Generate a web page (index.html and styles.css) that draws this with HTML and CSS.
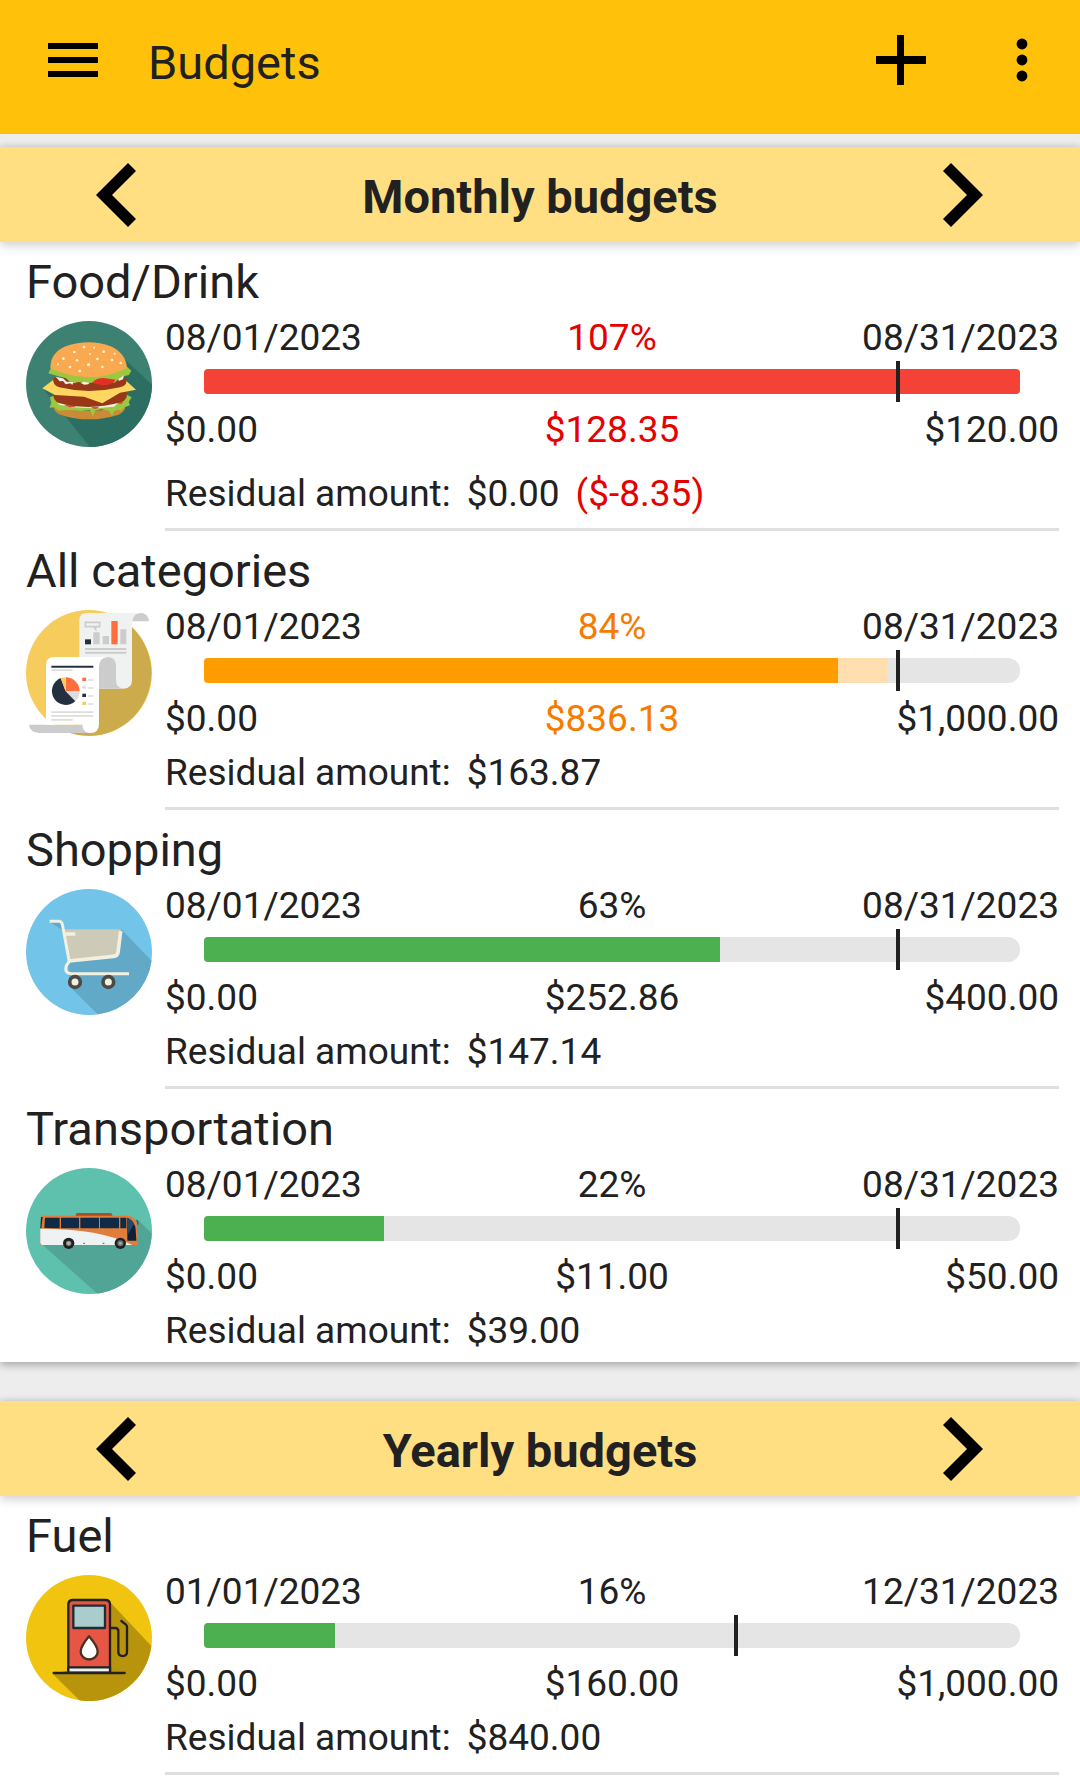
FILE: index.html
```html
<!DOCTYPE html>
<html lang="en">
<head>
<meta charset="utf-8">
<meta name="viewport" content="width=device-width, initial-scale=1">
<title>Budgets</title>
<link rel="stylesheet" href="styles.css">
</head>
<body>
<header class="app-bar">
  <button class="icon-button" type="button" aria-label="Menu">
    <svg width="50" height="50" viewBox="0 0 50 50"><path d="M0 8h50v6H0zM0 22h50v6H0zM0 36h50v6H0z"/></svg>
  </button>
  <h1 class="app-title">Budgets</h1>
  <button class="icon-button" type="button" aria-label="Add budget">
    <svg width="50" height="50" viewBox="0 0 50 50"><path d="M21 0h7v21h22v8H28v21h-7V29H0v-8h21z"/></svg>
  </button>
  <button class="icon-button more" type="button" aria-label="More options">
    <svg width="12" height="50" viewBox="0 0 12 50"><circle cx="6" cy="9" r="5.4"/><circle cx="6" cy="25" r="5.4"/><circle cx="6" cy="41" r="5.4"/></svg>
  </button>
</header>

<main class="cards">
  <section class="card">
    <div class="period">
      <button class="icon-button" type="button" aria-label="Previous month">
        <svg width="40" height="66" viewBox="0 0 40 66"><path d="M31 1l8 8-24 24 24 24-8 8L-1 33z"/></svg>
      </button>
      <h2 class="period-title">Monthly budgets</h2>
      <button class="icon-button" type="button" aria-label="Next month">
        <svg width="40" height="66" viewBox="0 0 40 66"><path d="M8 1L0 9l24 24L0 57l8 8 32-32z"/></svg>
      </button>
    </div>

    <article class="budget over">
      <h3 class="name">Food/Drink</h3>
      <div class="content">
        <svg class="category" viewBox="48 33 378 378" aria-hidden="true">
          <circle cx="237" cy="222" r="189" fill="#3c8172"/>
          <path d="M344 148L426 224A189 189 0 0 1 240 411L103 240z" fill="#2c6e61"/>
          <path d="M131 290q106 26 215-1q0 17-20 25q-90 28-175 0q-20-9-20-24z" fill="#cb8a35"/>
          <path d="M120 262l16-8 205-4 24 12-9 14 4 10-16 6-12 10-10-3-10 5-6 15-9-17-24-4-18 4-6 18-9-19-28 2-36-3-30 2-12-10-16 1 6-13z" fill="#9cc83f"/>
          <path d="M137 269q40 24 100 20t95-17l-20 18-55 5-70-3-40-8z" fill="#f1f0e4"/>
          <path d="M160 284l18 8 20-2-14-9zM243 291q13 12 25-1zM320 280l20-12-4 14z" fill="#e0483a"/>
          <path d="M130 246q107-30 219 0q7 23-17 31q-92 26-184 3q-21-8-18-34z" fill="#983818"/>
          <path d="M97 235l40-31 203 1 38 34-48 9-53 32-55-20-87-5z" fill="#ffd760"/>
          <path d="M130 203q107-17 219 0q6 23-19 29q-92 22-182 0q-22-7-18-29z" fill="#983818"/>
          <path d="M115 190l9-18 227-2 13 12-7 13-25 6-18 17-20-4-18 8-24-5-24 4-22-5-20 5-18-16-28-8z" fill="#9cc83f"/>
          <path d="M137 200l12 14 10-1 8 10 14-3 6 5 3-9-20-1-11-10zM213 220l8-5 17 3-3 5-12 1zM325 206l17-10-3 12-13 5z" fill="#f1f0e4"/>
          <path d="M247 219q9-15 34-15l36 5q-8 16-41 17z" fill="#e52e27"/>
          <path d="M121 175q0-47 46-66q70-24 135 0q45 20 49 65q-110 55-230 1z" fill="#f9aa50"/>
          <g fill="#fff2d5"><circle cx="222" cy="111" r="4"/><circle cx="193" cy="126" r="4"/><circle cx="160" cy="146" r="4"/><circle cx="144" cy="163" r="3"/><circle cx="180" cy="171" r="4"/><circle cx="201" cy="151" r="4"/><circle cx="236" cy="164" r="5"/><circle cx="240" cy="132" r="3"/><circle cx="281" cy="125" r="4"/><circle cx="252" cy="113" r="3"/><circle cx="262" cy="147" r="4"/><circle cx="306" cy="150" r="4"/><circle cx="332" cy="159" r="4"/><circle cx="277" cy="171" r="4"/><circle cx="209" cy="183" r="4"/><circle cx="314" cy="131" r="3"/></g>
        </svg>
        <div class="details">
          <div class="triple"><span>08/01/2023</span><span class="value">107%</span><span>08/31/2023</span></div>
          <div class="track" role="progressbar" aria-label="Food/Drink spent" aria-valuenow="107" aria-valuemin="0" aria-valuemax="107">
            <div class="fill full" style="width:100%"></div>
            <div class="today" style="left:85%"></div>
          </div>
          <div class="triple amounts"><span>$0.00</span><span class="value">$128.35</span><span>$120.00</span></div>
          <p class="residual"><span>Residual amount:</span><span>$0.00</span><span class="value">($-8.35)</span></p>
          <hr class="divider">
        </div>
      </div>
    </article>

    <article class="budget warning">
      <h3 class="name">All categories</h3>
      <div class="content">
        <svg class="category" viewBox="48 30 378 378" aria-hidden="true">
          <circle cx="237" cy="219" r="189" fill="#f6cd5d"/>
          <path d="M365 81A189 189 0 0 1 183 400l35-135 147-90z" fill="#ccab4d"/>
          <path d="M366 64q4-25 26-25t25 25z" fill="#ccc"/>
          <path d="M208 60q0-21 22-21h160q-24 2-24 28v174q0 25-25 25h-80V172h-53z" fill="#f0f2f2"/>
          <path d="M266 195q2-24 26-24t26 24v46q0 25 24 25h-76z" fill="#ccc"/>
          <path d="M226 67h43v13h-43zM252 82l5 6v-6" fill="none" stroke="#ccc" stroke-width="5"/>
          <path d="M225 118h18v15h-18z" fill="#243040"/>
          <path d="M250 97h19v36h-19zM278 108h19v25h-19zM331 88h18v45h-18zM225 144h124v6H225zM225 155h124v6H225z" fill="#ccc"/>
          <path d="M304 63h19v70h-19z" fill="#ff6e3d"/>
          <path d="M57 374h160l22 25H88q-29-3-31-25z" fill="#ccc"/>
          <path d="M108 194q0-23 24-23h162q-27 2-27 28v174q-1 26-25 26t-25-25H108z" fill="#fff"/>
          <path d="M124 197h126v6H124z" fill="#243040"/>
          <path d="M124 208h64v5h-64zM124 334h126v5H124zM124 345h126v5H124zM124 357h64v5h-64zM233 238h17v4h-17zM233 262h17v4h-17zM233 286h17v4h-17zM233 310h17v4h-17zM217 257h10v9h-10z" fill="#ddd"/>
          <path d="M167 274V232a42 42 0 0 1 42 42z" fill="#ff6e3d"/>
          <path d="M167 274h42a42 42 0 0 1-13 30z" fill="#ddd"/>
          <path d="M167 274l29 30a42 42 0 1 1-44-70z" fill="#243040"/>
          <path d="M167 274l-15-40 15-2z" fill="#f6cd5d"/>
          <path d="M217 233h11v10h-11z" fill="#ff6e3d"/><path d="M217 281h11v10h-11z" fill="#243040"/><path d="M217 305h11v10h-11z" fill="#f6cd5d"/>
        </svg>
        <div class="details">
          <div class="triple"><span>08/01/2023</span><span class="value">84%</span><span>08/31/2023</span></div>
          <div class="track" role="progressbar" aria-label="All categories spent" aria-valuenow="84" aria-valuemin="0" aria-valuemax="100">
            <div class="fill" style="width:77.7%"></div>
            <div class="planned" style="width:6%"></div>
            <div class="today" style="left:85%"></div>
          </div>
          <div class="triple amounts"><span>$0.00</span><span class="value">$836.13</span><span>$1,000.00</span></div>
          <p class="residual"><span>Residual amount:</span><span>$163.87</span></p>
          <hr class="divider">
        </div>
      </div>
    </article>

    <article class="budget">
      <h3 class="name">Shopping</h3>
      <div class="content">
        <svg class="category" viewBox="48 27 378 378" aria-hidden="true">
          <circle cx="237" cy="216" r="189" fill="#72c5e9"/>
          <path d="M119 126h38l22 22h155l91 94A189 189 0 0 1 263 403L178 318l-8-160z" fill="#62a8c7"/>
          <path d="M157 126l8 22h14z" fill="#72c5e9"/>
          <path d="M163 148h170l-11 82-146 14z" fill="#cecab8"/>
          <path d="M119 124h27q10 0 12 13l19 104q1 6-7 14-9 24 12 26h175" fill="none" stroke="#f3f0df" stroke-width="9"/>
          <path d="M166 162h30M177 243l133-14q12-1 14-11l8-65" fill="none" stroke="#f3f0df" stroke-width="11"/>
          <path d="M170 149h157v5H170z" fill="#cecab8"/>
          <circle cx="195" cy="306" r="16" fill="#f3f0df" stroke="#4b4a46" stroke-width="11"/>
          <circle cx="295" cy="306" r="16" fill="#f3f0df" stroke="#4b4a46" stroke-width="11"/>
        </svg>
        <div class="details">
          <div class="triple"><span>08/01/2023</span><span class="value">63%</span><span>08/31/2023</span></div>
          <div class="track" role="progressbar" aria-label="Shopping spent" aria-valuenow="63" aria-valuemin="0" aria-valuemax="100">
            <div class="fill" style="width:63.2%"></div>
            <div class="today" style="left:85%"></div>
          </div>
          <div class="triple amounts"><span>$0.00</span><span class="value">$252.86</span><span>$400.00</span></div>
          <p class="residual"><span>Residual amount:</span><span>$147.14</span></p>
          <hr class="divider">
        </div>
      </div>
    </article>

    <article class="budget">
      <h3 class="name">Transportation</h3>
      <div class="content">
        <svg class="category" viewBox="48 24 378 378" aria-hidden="true">
          <circle cx="237" cy="213" r="189" fill="#5ec1ae"/>
          <path d="M382 178l43 42A189 189 0 0 1 262 401L96 253z" fill="#51a596"/>
          <path d="M200 159h104l4 9H196z" fill="#a94e27"/>
          <path d="M94 167h260q20 2 26 22l4 66H91z" fill="#e07d3a"/>
          <path d="M91 206q180 0 276 49H96q-5-2-5-8z" fill="#eff2f3"/>
          <path d="M93 171h5l-4 34h-3z" fill="#202124"/>
          <path d="M105 173h44v32l-46-1zM153 173h54v32h-54zM211 173h56v32h-56zM270 173h57v32h-57zM331 173h18v32h-18z" fill="#112b46"/>
          <path d="M352 173q23 10 25 35l2 34h-27z" fill="#102039"/>
          <path d="M352 173q14 5 20 19l-20 34z" fill="#254768"/>
          <path d="M379 182q6 1 4 12" fill="none" stroke="#594e45" stroke-width="4"/>
          <circle cx="176" cy="250" r="17" fill="#202020"/><circle cx="176" cy="250" r="8" fill="#8a8b8b"/><circle cx="176" cy="250" r="4" fill="#bbb"/>
          <circle cx="331" cy="250" r="17" fill="#202020"/><circle cx="331" cy="250" r="9" fill="#6d7579"/><circle cx="331" cy="250" r="4" fill="#aaa"/>
          <path d="M220 248h5v4h-5zM278 248h5v4h-5z" fill="#777"/>
        </svg>
        <div class="details">
          <div class="triple"><span>08/01/2023</span><span class="value">22%</span><span>08/31/2023</span></div>
          <div class="track" role="progressbar" aria-label="Transportation spent" aria-valuenow="22" aria-valuemin="0" aria-valuemax="100">
            <div class="fill" style="width:22%"></div>
            <div class="today" style="left:85%"></div>
          </div>
          <div class="triple amounts"><span>$0.00</span><span class="value">$11.00</span><span>$50.00</span></div>
          <p class="residual"><span>Residual amount:</span><span>$39.00</span></p>
        </div>
      </div>
    </article>
  </section>

  <section class="card">
    <div class="period">
      <button class="icon-button" type="button" aria-label="Previous year">
        <svg width="40" height="66" viewBox="0 0 40 66"><path d="M31 1l8 8-24 24 24 24-8 8L-1 33z"/></svg>
      </button>
      <h2 class="period-title">Yearly budgets</h2>
      <button class="icon-button" type="button" aria-label="Next year">
        <svg width="40" height="66" viewBox="0 0 40 66"><path d="M8 1L0 9l24 24L0 57l8 8 32-32z"/></svg>
      </button>
    </div>

    <article class="budget">
      <h3 class="name">Fuel</h3>
      <div class="content">
        <svg class="category" viewBox="48 30 378 378" aria-hidden="true">
          <circle cx="237" cy="219" r="189" fill="#f1c40f"/>
          <path d="M298 109L424 243A189 189 0 0 1 208 406L128 326l100-20z" fill="#b8940d"/>
          <g stroke="#222" stroke-width="7" stroke-linecap="round" stroke-linejoin="round">
            <path d="M175 322V119q0-14 14-14h97q14 0 14 14v203z" fill="#e65644"/>
            <path d="M175 307h125v16H175z" fill="#eceff1"/>
            <path d="M190 122h95v67h-95z" fill="#a9cccd" stroke="#202b35"/>
            <path d="M131 324h213M304 189h12q9 0 9 10v62q0 12 13 12t13-12v-75q0-5-4-8l-13-10" fill="none"/>
            <path d="M237 214q-25 30-25 46a25 23 0 0 0 51 0q0-16-26-46z" fill="#fff" stroke="#4a3020"/>
          </g>
        </svg>
        <div class="details">
          <div class="triple"><span>01/01/2023</span><span class="value">16%</span><span>12/31/2023</span></div>
          <div class="track" role="progressbar" aria-label="Fuel spent" aria-valuenow="16" aria-valuemin="0" aria-valuemax="100">
            <div class="fill" style="width:16%"></div>
            <div class="today" style="left:65.2%"></div>
          </div>
          <div class="triple amounts"><span>$0.00</span><span class="value">$160.00</span><span>$1,000.00</span></div>
          <p class="residual"><span>Residual amount:</span><span>$840.00</span></p>
          <hr class="divider">
        </div>
      </div>
    </article>
  </section>
</main>
</body>
</html>
```

FILE: styles.css
```css
* {
  box-sizing: border-box;
}

body {
  margin: 0;
  min-height: 100vh;
  display: flex;
  flex-direction: column;
  background: #ededed;
  color: #212121;
  font-family: Roboto, "Liberation Sans", sans-serif;
  font-size: 37px;
  line-height: 44px;
}

h1,
h2,
h3,
p {
  margin: 0;
}

.icon-button {
  display: flex;
  padding: 0;
  border: 0;
  background: none;
  color: #000;
  cursor: pointer;
}

.icon-button svg {
  display: block;
  overflow: visible;
  fill: currentColor;
}

.app-bar {
  display: flex;
  align-items: center;
  padding: 32px 52px 46px 48px;
  background: #ffc10a;
}

.app-title {
  flex: 1;
  margin-left: 50px;
  padding-top: 6px;
  font-size: 47px;
  font-weight: 400;
  line-height: 50px;
}

.more {
  margin-left: 90px;
}

.cards {
  flex: 1;
  display: flex;
  flex-direction: column;
  gap: 39px;
  padding-top: 13px;
}

.card {
  background: #fff;
  box-shadow: 0 3px 8px rgba(0, 0, 0, 0.3);
}

.card:last-child {
  flex: 1;
}

.period {
  display: flex;
  align-items: center;
  justify-content: space-between;
  height: 95px;
  padding: 0 97px;
  background: #ffdf82;
  box-shadow: 0 3px 10px rgba(0, 0, 0, 0.2);
}

.period-title {
  padding-top: 5px;
  font-size: 47px;
  font-weight: 700;
  line-height: 56px;
}

.budget {
  padding: 12px 21px 0 26px;
}

.budget:last-child {
  padding-bottom: 9px;
}

.name {
  font-size: 47px;
  font-weight: 400;
  line-height: 56px;
}

.content {
  display: flex;
  align-items: flex-start;
  gap: 13px;
  padding-top: 6px;
}

.category {
  flex: none;
  width: 126px;
  height: 126px;
  margin-top: 5px;
}

.details {
  flex: 1;
}

.triple {
  display: grid;
  grid-template-columns: 1fr auto 1fr;
}

.triple > :last-child {
  text-align: right;
}

.track {
  position: relative;
  display: flex;
  height: 25px;
  margin: 9px 39px 14px;
  border-radius: 4px 12px 12px 4px;
  background: #e5e5e5;
}

.fill {
  border-radius: 4px 0 0 4px;
  background: #4caf50;
}

.full {
  border-radius: 4px;
}

.over .track {
  background: none;
}

.over .fill {
  background: #f44336;
}

.warning .fill {
  background: #ff9c00;
}

.planned {
  background: #ffdeb0;
}

.today {
  position: absolute;
  top: -8px;
  bottom: -8px;
  width: 4px;
  margin-left: -2px;
  background: #212121;
}

.over .value {
  color: #e60000;
}

.warning .value {
  color: #f57c00;
}

.residual {
  display: flex;
  gap: 16px;
  padding-top: 10px;
}

.over .residual {
  padding-top: 20px;
}

.divider {
  height: 3px;
  margin: 12px 0 0;
  border: 0;
  background: #dfdfdf;
}
```
